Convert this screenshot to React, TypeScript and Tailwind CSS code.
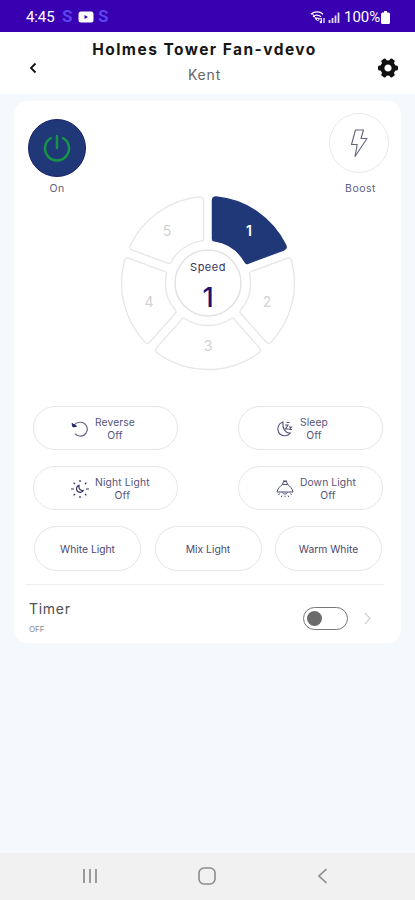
import React, { useState } from 'react';
import { clsx } from 'clsx';

const SPEEDS = [1, 2, 3, 4, 5];
const OUTER = 86.5;
const INNER = 42.5;
const GAP = 4.4;

// Angles of the dividers between speeds, clockwise from the top
const DIVIDERS = [0, 69.5, 138.5, 221.5, 290.5, 360];

// Point at distance r along the spoke at `deg`, shifted sideways by `shift`
const spokePoint = (deg: number, r: number, shift: number) => {
    const a = (deg * Math.PI) / 180;
    const along = Math.sqrt(r * r - shift * shift);
    const x = along * Math.sin(a) + shift * Math.cos(a);
    const y = -along * Math.cos(a) + shift * Math.sin(a);
    return `${x.toFixed(2)} ${y.toFixed(2)}`;
};

const segmentPath = (index: number) => {
    const start = DIVIDERS[index];
    const end = DIVIDERS[index + 1];
    return [
        `M ${spokePoint(start, OUTER - 4, GAP)}`,
        `Q ${spokePoint(start, OUTER, GAP)} ${spokePoint(start, OUTER, GAP + 4)}`,
        `A ${OUTER} ${OUTER} 0 0 1 ${spokePoint(end, OUTER, -GAP - 4)}`,
        `Q ${spokePoint(end, OUTER, -GAP)} ${spokePoint(end, OUTER - 4, -GAP)}`,
        `L ${spokePoint(end, INNER + 2, -GAP)}`,
        `Q ${spokePoint(end, INNER, -GAP)} ${spokePoint(end, INNER, -GAP - 2)}`,
        `A ${INNER} ${INNER} 0 0 0 ${spokePoint(start, INNER, GAP + 2)}`,
        `Q ${spokePoint(start, INNER, GAP)} ${spokePoint(start, INNER + 2, GAP)}`,
        'Z',
    ].join(' ');
};

const LABELS = [
    { x: 41, y: -52 },
    { x: 59, y: 18.5 },
    { x: 0, y: 62.5 },
    { x: -59, y: 18.5 },
    { x: -41, y: -52 },
];

const StatusBar = () => (
    <div className="h-8 shrink-0 bg-[#3900b2] flex items-center justify-between pl-[26px] pr-[25px] pt-0.5 font-['Roboto',sans-serif] text-white">
        <div className="flex items-center">
            <span className="w-[36px] text-[15px] tracking-[-0.1px]">4:45</span>
            <span className="w-[16px] text-[17px] font-bold text-[#5b45ee]">S</span>
            <svg width="16" height="12" viewBox="0 0 16 12" className="mr-1">
                <rect x="0.5" y="0.5" width="15" height="11" rx="2.5" fill="#fff" />
                <path d="M6.5 4v4l3.5-2z" fill="#3900b2" />
            </svg>
            <span className="text-[17px] font-bold text-[#5b45ee]">S</span>
        </div>
        <div className="flex items-center">
            <svg width="32" height="14" viewBox="0 0 32 14" fill="none" stroke="#fff">
                <path d="M1 4.2C4.5 1.2 10 1.2 13 4.2M3 6.7c2.4-2 5.5-2 8 0M5 9c1.4-1 3-1 4.3 0" strokeWidth="1.3" />
                <path d="M2 3l5.5 8 3-3" strokeWidth="1" />
                <path d="M11.3 8v5M9.800 11.500l1.500 1.500M14 13V8" strokeWidth="1.2" />
                <path d="M19.5 13v-3M22.5 13V8M25.5 13V5.5M28.5 13V2.5" strokeWidth="1.800" opacity="0.85" />
            </svg>
            <span className="w-[37px] ml-0.5 text-[15px]">100%</span>
            <svg width="9" height="13" viewBox="0 0 9 13" fill="#fff">
                <path d="M3 0h3v1.500h1.500Q9 1.500 9 3v8.500Q9 13 7.500 13h-6Q0 13 0 11.500V3q0-1.500 1.500-1.500H3z" />
            </svg>
        </div>
    </div>
);

const Header = () => (
    <header className="h-[62px] shrink-0 bg-white flex justify-between pl-[28px] pr-[16px]">
        <button className="w-[22px] pt-[9px]">
            <svg width="10" height="12" viewBox="0 0 10 12" fill="none" stroke="#111" strokeWidth="1.800">
                <path d="M7.500 1.500L3 6l4.500 4.500" />
            </svg>
        </button>
        <div className="flex flex-col items-center pt-[8px]">
            <h1 className="text-[15.500px] leading-5 font-bold tracking-[1.450px] text-[#161616] whitespace-nowrap">Holmes Tower Fan-vdevo</h1>
            <p className="text-[14px] leading-5 mt-[5px] tracking-[0.800px] text-[#666]">Kent</p>
        </div>
        <button className="w-[40px] pt-[10px] flex items-center justify-end">
            <svg width="22" height="22" viewBox="-11 -11 22 22">
                <circle r="5.700" fill="none" stroke="#111" strokeWidth="4.200" />
                {[0, 60, 120, 180, 240, 300].map(deg => (
                    <rect key={deg} x="-2.600" y="-10" width="5.200" height="5" rx="1.500" fill="#111" transform={`rotate(${deg + 30})`} />
                ))}
            </svg>
        </button>
    </header>
);

const SpeedDial = ({ speed, onChange }: { speed: number; onChange: (s: number) => void }) => (
    <svg width="178" height="178" viewBox="-89 -89 178 178" className="mx-auto font-['Inter',sans-serif]">
        {SPEEDS.map((value, idx) => (
            <g key={value} onClick={() => onChange(value)} className="cursor-pointer">
                <path
                    d={segmentPath(idx)}
                    fill={value === speed ? '#203878' : '#fff'}
                    stroke={value === speed ? '#203878' : '#e6e6e6'}
                    strokeWidth="1.300"
                />
                <text
                    x={LABELS[idx].x}
                    y={LABELS[idx].y}
                    dy="0.360em"
                    textAnchor="middle"
                    fontSize="14"
                    fontWeight={value === speed ? 600 : 400}
                    fill={value === speed ? '#fff' : '#d2d2d2'}
                >
                    {value}
                </text>
            </g>
        ))}
        <circle r="33" fill="#fff" stroke="#e2e2e2" strokeWidth="1.500" />
        <text y="-12" textAnchor="middle" fontSize="11" letterSpacing="0.500" fill="#35355f">Speed</text>
        <text y="23.500" textAnchor="middle" fontSize="27" fontWeight="500" fill="#1c1470">{speed}</text>
    </svg>
);

const ReverseIcon = () => (
    <svg width="18" height="18" viewBox="0 0 18 18" fill="none" stroke="#66668a" strokeWidth="1.200">
        <path d="M2.500 6C6 .8 13 1.200 15.500 6c2.500 5-1.500 10.500-7 10-2-.2-3.500-1-4.500-2.300" />
        <path d="M1 3.500l1 3.500 3.500-.8z" fill="#25236b" stroke="#25236b" strokeWidth="1" />
    </svg>
);

const SleepIcon = () => (
    <svg width="18" height="18" viewBox="0 0 18 18" fill="none" stroke="#55557e" strokeWidth="1.100">
        <path d="M7 2C2.500 3 .8 8 2.500 12c2 4.500 9 5 11.800 1-4.500.7-8.300-4.800-7.300-11z" />
        <path d="M9 5h3L9.500 9h3M13 7h2.500l-2 2.500H16M10.500 2.500h3" />
    </svg>
);

const NightLightIcon = () => (
    <svg width="20" height="20" viewBox="0 0 20 20" fill="none" stroke="#33335f" strokeWidth="1.200">
        <path d="M9 6.300c-3 .6-3.300 5 -.8 6.500 2 1.200 4.300.3 5-1.300-2.700.7-4.700-1.800-4.200-5.200z" />
        <path d="M10 1v2M10 17v2M1 10h3M16 10h3M3.600 3.600l1.500 1.500M15 15l1.400 1.400M3.600 16.400L5 15M15 5l1.400-1.400" />
    </svg>
);

const DownLightIcon = () => (
    <svg width="18" height="18" viewBox="0 0 18 18" fill="none" stroke="#4c4c76" strokeWidth="1">
        <path d="M7 1h4M6.500 4.500L7.500 1.500h3l1 3M6.500 4.500h5C14 6 16.500 9 17 12H1c.5-3 3-6 5.500-7.500z" />
        <path d="M6.500 12.500c.5 2 4.500 2 5 0M3.500 13.500L2.500 15M14.500 13.500l1 1.500M6 15.500l-.7 1.500M12 15.500l.7 1.500M9 15.700v1.500" />
    </svg>
);

const MODES = [
    { name: 'Reverse', icon: ReverseIcon, spacing: 'tracking-[0.100px]' },
    { name: 'Sleep', icon: SleepIcon, spacing: 'tracking-[0.100px]' },
    { name: 'Night Light', icon: NightLightIcon, spacing: 'tracking-[0.150px]' },
    { name: 'Down Light', icon: DownLightIcon, spacing: 'tracking-[0.100px]' },
];

const LIGHTS = ['White Light', 'Mix Light', 'Warm White'];

const App = () => {
    const [speed, setSpeed] = useState(1);
    const [timerOn, setTimerOn] = useState(false);

    return (
        <div className="h-[900px] w-full bg-[#f5f9fe] flex flex-col font-['Inter',sans-serif]">
            <StatusBar />
            <Header />

            <main className="flex-1 pt-[7px] px-[14px]">
                <section className="h-[542px] bg-white rounded-[14px]">
                    {/* Power and boost */}
                    <div className="h-[93px] flex justify-between pl-[14px] pr-[12px] text-[10.500px] leading-[14px] text-[#60607c]">
                        <div className="w-[58px] pt-[18px] flex flex-col items-center">
                            <button className="size-[58px] shrink-0 rounded-full bg-[#203878] border border-[#1b2169] flex items-center justify-center">
                                <svg width="30" height="30" viewBox="0 0 30 30" fill="none" stroke="#159447" strokeWidth="2.500" strokeLinecap="round">
                                    <path d="M15 3v12M9 5a12 12 0 1 0 12 0" />
                                </svg>
                            </button>
                            <span className="mt-[5px] tracking-[0.300px]">On</span>
                        </div>
                        <div className="w-[60px] pt-[12px] flex flex-col items-center">
                            <button className="size-[60px] shrink-0 rounded-full border-[1.500px] border-[#e8e8e8] flex items-center justify-center">
                                <svg width="18" height="30" viewBox="0 0 18 30" fill="none" stroke="#62627e" strokeWidth="1.100" strokeLinejoin="round">
                                    <path d="M5.500 2h8l-2.500 8.500h6L5 28.500l2.200-12H1.500z" />
                                </svg>
                            </button>
                            <span className="mt-[9px] ml-[3px] tracking-[0.500px]">Boost</span>
                        </div>
                    </div>

                    <div className="h-[212px] flex">
                        <SpeedDial speed={speed} onChange={setSpeed} />
                    </div>

                    {/* Modes */}
                    <div className="grid grid-cols-[145px_145px] justify-between gap-y-4 pl-[19px] pr-[18px]">
                        {MODES.map(({ name, icon: Icon, spacing }) => (
                            <button
                                key={name}
                                className="h-11 rounded-full border-[1.500px] border-[#e6e6e6] flex items-center pl-[36px] pt-px gap-[5px] text-[10.300px] leading-[13px] text-[#55557a]"
                            >
                                <span className="w-[20px] flex justify-center">
                                    <Icon />
                                </span>
                                <span className={clsx('text-center whitespace-nowrap', spacing)}>
                                    {name}
                                    <br />
                                    Off
                                </span>
                            </button>
                        ))}
                    </div>

                    {/* Light colour */}
                    <div className="mt-4 flex justify-between pl-[20px] pr-[19px]">
                        {LIGHTS.map(light => (
                            <button key={light} className="w-[107px] h-[45px] pt-0.5 rounded-full border-[1.500px] border-[#e6e6e6] text-[10.300px] text-[#4a4a72]">
                                {light}
                            </button>
                        ))}
                    </div>

                    {/* Timer */}
                    <div className="mt-[13px] ml-[11px] mr-[17px] border-t border-[#ededed] flex justify-between pl-1 pr-[13px]">
                        <div className="pt-[14px]">
                            <p className="text-[14px] leading-5 tracking-[0.700px] text-[#505050]">Timer</p>
                            <p className="mt-1 text-[8px] leading-[12px] text-[#8b8b8b]">{timerOn ? 'ON' : 'OFF'}</p>
                        </div>
                        <div className="flex items-center gap-4 pt-[22px] self-start">
                            <button
                                onClick={() => setTimerOn(!timerOn)}
                                className={clsx('w-[45px] h-[23px] rounded-full border border-[#777] px-[3px] flex items-center', timerOn && 'justify-end')}
                            >
                                <span className="size-[15px] rounded-full bg-[#6b6b6b]" />
                            </button>
                            <svg width="7" height="13" viewBox="0 0 7 13" fill="none" stroke="#d0d0d0" strokeWidth="1.200">
                                <path d="M1 1l5 5.500-5 5.500" />
                            </svg>
                        </div>
                    </div>
                </section>
            </main>

            <nav className="h-[47px] shrink-0 bg-[#f1f1f1] flex justify-between items-center pl-[82px] pr-[87px] pb-0.5">
                <svg width="16" height="16" viewBox="0 0 16 16" stroke="#8c8c8c" strokeWidth="1.700">
                    <path d="M2 1v14M8 1v14M14 1v14" />
                </svg>
                <svg width="18" height="18" viewBox="0 0 18 18" fill="none" stroke="#8c8c8c" strokeWidth="1.600" className="-ml-0.5">
                    <rect x="1" y="1" width="16" height="16" rx="5" />
                </svg>
                <svg width="11" height="16" viewBox="0 0 11 16" fill="none" stroke="#8c8c8c" strokeWidth="1.700">
                    <path d="M9.500 1L2 8l7.500 7" />
                </svg>
            </nav>
        </div>
    );
};

export default App;
